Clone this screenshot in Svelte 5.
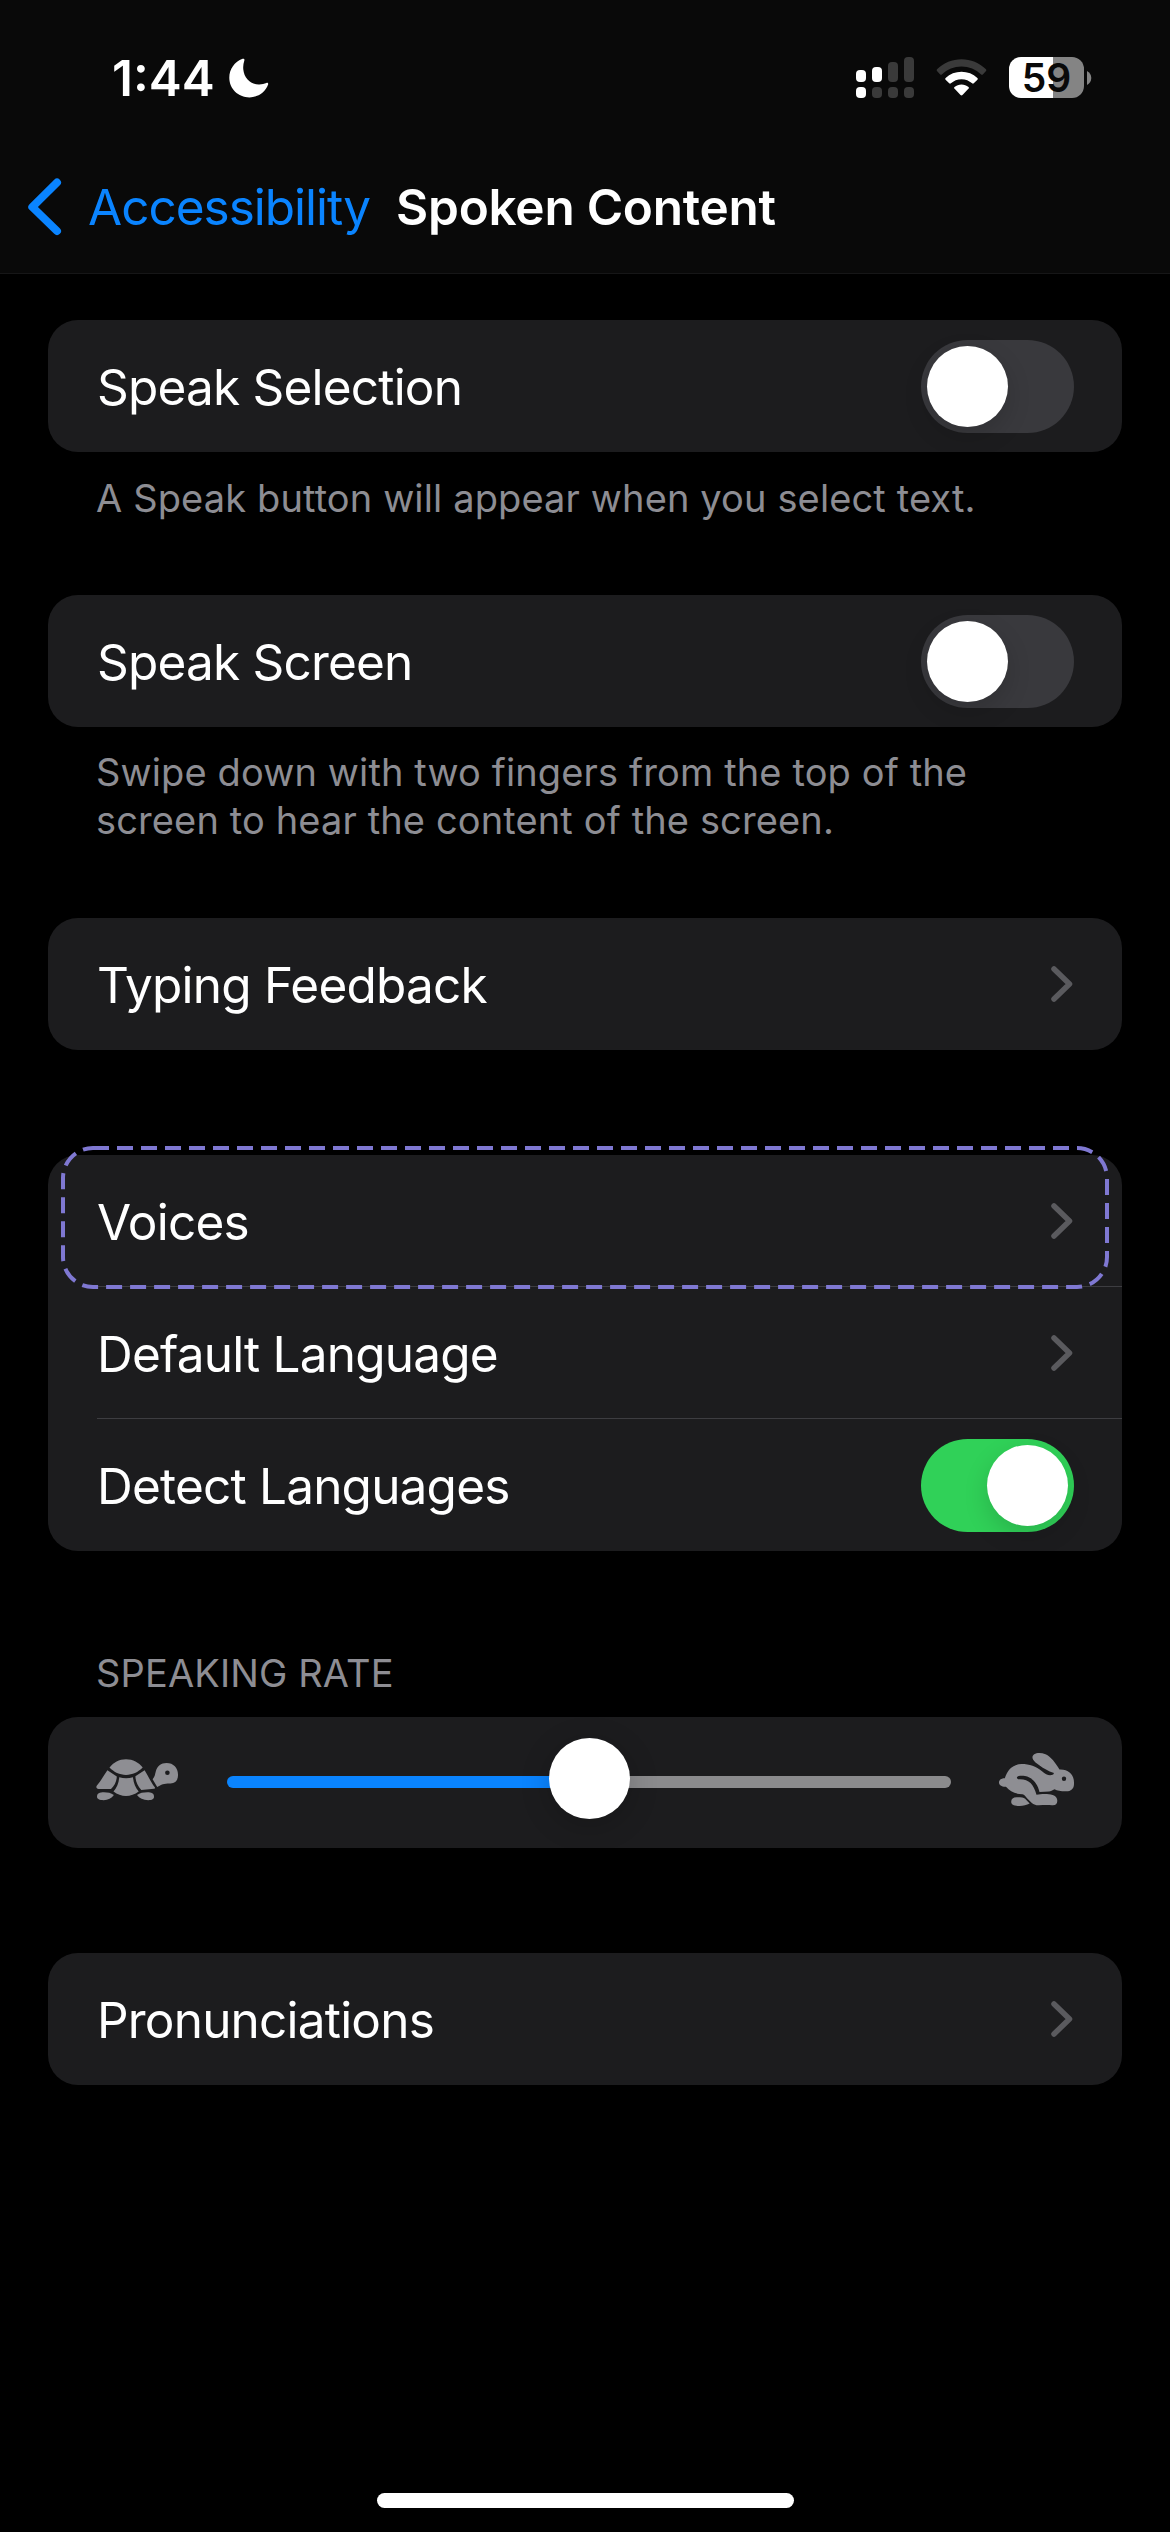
<script lang="ts">
	let speakSelection = $state(false);
	let speakScreen = $state(false);
	let detectLanguages = $state(true);
	let rate = $state(50);

	const bars = [
		{ height: 12, on: true, dot: true },
		{ height: 15, on: true, dot: false },
		{ height: 20, on: false, dot: false },
		{ height: 25, on: false, dot: false }
	];
</script>

{#snippet chevron()}
	<svg class="chevron" width="22" height="36" viewBox="0 0 22 36" aria-hidden="true">
		<path d="M3 3 18.5 18 3 33" />
	</svg>
{/snippet}

{#snippet toggle(label: string, on: boolean, onToggle: () => void)}
	<button type="button" class="toggle" class:on role="switch" aria-checked={on} aria-label={label} onclick={onToggle}>
		<i></i>
	</button>
{/snippet}

<div class="screen">
	<header>
		<div class="status">
			<div class="clock">
				<span>1:44</span>
				<svg width="40" height="40" viewBox="0 0 40 40" aria-hidden="true">
					<path
						d="M13.6.8C14.6.3 15.8 1 15.4 2.200C14.300 5.500 14 8.500 14.300 11.500C15.200 20.200 21.500 26.300 29.600 26.400C32.500 26.500 35.200 26 37.400 25C38.700 24.500 39.500 25.400 39.100 26.600C36.500 34.200 29 39.400 20.500 39.400C9.200 39.400.3 30.900.3 19.800C.3 11.200 5.500 3.800 13.600.8Z"
					/>
				</svg>
			</div>
			<div class="indicators">
				<div class="signal">
					{#each bars as bar}
						<div>
							<i class:on={bar.on} style={`height: ${bar.height}px`}></i>
							<i class="dot" class:on={bar.dot}></i>
						</div>
					{/each}
				</div>
				<svg class="wifi" width="51" height="37" viewBox="0.5 0 51 38" aria-hidden="true">
					<path class="dim" d="M.8 12.300Q0 11.500.9 10.600C7.700 4 16.500.3 26 .3S44.300 4 51.100 10.600Q52 11.500 51.200 12.300L47.900 15.900Q47 16.700 46.200 15.900C40.700 10.600 33.600 7.700 26 7.700S11.300 10.600 5.800 15.900Q5 16.700 4.100 15.900Z" />
					<path d="M9.600 21.300Q8.800 20.400 9.700 19.600C14.100 15.500 19.800 13.200 26 13.200S37.900 15.500 42.300 19.600Q43.200 20.400 42.400 21.300L38.600 25Q37.800 25.800 36.900 25C34 22.300 30.200 20.700 26 20.700S18 22.300 15.100 25Q14.200 25.800 13.400 25Z" />
					<path d="M18.700 30.400Q17.900 29.500 18.800 28.700C20.800 27.100 23.300 26.200 26 26.200S31.200 27.100 33.200 28.700Q34.100 29.500 33.300 30.400L27 37Q26 38 25 37Z" />
				</svg>
				<div class="battery">
					<span>59</span>
					<svg width="5" height="14" viewBox="0 0 5 14" aria-hidden="true"><path d="M0 0C2.500 1.200 4.300 3.800 4.300 7S2.500 12.800 0 14Z" /></svg>
				</div>
			</div>
		</div>
		<nav>
			<svg width="34" height="58" viewBox="0 0 34 58" aria-hidden="true">
				<path d="M29 4.500 4.300 29 29 53" />
			</svg>
			<a href="#accessibility">Accessibility</a>
			<h1>Spoken Content</h1>
		</nav>
	</header>

	<main>
		<section class="card">
			<div class="row">
				<span>Speak Selection</span>
				{@render toggle('Speak Selection', speakSelection, () => (speakSelection = !speakSelection))}
			</div>
		</section>
		<p class="note first">A Speak button will appear when you select text.</p>

		<section class="card">
			<div class="row">
				<span>Speak Screen</span>
				{@render toggle('Speak Screen', speakScreen, () => (speakScreen = !speakScreen))}
			</div>
		</section>
		<p class="note second">
			Swipe down with two fingers from the top of the<br />screen to hear the content of the screen.
		</p>

		<section class="card typing">
			<div class="row"><span>Typing Feedback</span>{@render chevron()}</div>
		</section>

		<section class="card voices">
			<div class="row">
				<span>Voices</span>{@render chevron()}
				<svg class="highlight" width="1048" height="143" aria-hidden="true">
					<rect x="2" y="2" width="1044" height="139" rx="30" />
				</svg>
			</div>
			<div class="row"><span>Default Language</span>{@render chevron()}</div>
			<div class="row">
				<span>Detect Languages</span>
				{@render toggle('Detect Languages', detectLanguages, () => (detectLanguages = !detectLanguages))}
			</div>
		</section>

		<h2>SPEAKING RATE</h2>
		<section class="card rate">
			<svg class="animal" width="83" height="42" viewBox="0 0 83 42" aria-hidden="true">
				<path d="M13.500 8.600C17.500 3.300 23 .2 30 .2S42.700 3.300 46.700 8.600C42 13.300 36.500 15.900 30 15.900S18 13.300 13.500 8.600Z" />
				<path d="M11.400 11.200 20.800 17.500C20.600 22.500 18.700 26.500 15 29.900H2.500C.5 29.900-.3 28 .9 26.400C5.500 21.200 8 16 11.400 11.200Z" />
				<path d="M23.200 18.200C27.700 19.600 32.500 19.600 37 18.200C37.400 23.600 39.300 28.500 42.700 32.400C38.800 35.300 34.500 36.900 30 36.900S21.300 35.300 17.500 32.400C21 28.500 22.900 23.600 23.200 18.200Z" />
				<path d="M39.400 17.300 48.600 11.200C52 16.500 54.300 22.500 58.800 28.200C59.400 29.200 59 29.600 58 29.700L45.300 30.900C41.600 27 39.600 22.600 39.400 17.300Z" />
				<path d="M1 37.600C1 34.500 3.500 33.300 8 33.300C12 33.300 14.800 33.900 17.900 36C15.500 39.400 12.200 41.200 7.500 41.200C3.500 41.200 1 40.300 1 37.600Z" />
				<path d="M41 36C44 33.900 47 33.300 51.300 33.300C55.500 33.300 58 34.500 58 37.600C58 40.300 56 41.200 52.300 41.200C47 41.200 43.500 39.300 41 36Z" />
				<path
					fill-rule="evenodd"
					d="M70.500 4.100C77.500 4.100 82 9 82 15.500C82.300 20.700 79.500 24.400 74.500 24.400C68.500 24.300 65.500 25 61.200 28.100L56.600 20.300C59 17.500 59 15.300 59.700 12.800C61 7.500 65 4.100 70.500 4.100ZM71.400 11.400A2.300 2.300 0 1 0 71.400 16A2.300 2.300 0 1 0 71.400 11.400Z"
				/>
			</svg>
			<div class="slider" style={`--rate: ${rate}%`}>
				<i class="track"></i>
				<i class="thumb"></i>
				<input type="range" min="0" max="100" bind:value={rate} aria-label="Speaking rate" />
			</div>
			<svg class="animal" width="75" height="55" viewBox="0 0 75 55" aria-hidden="true">
				<path
					fill-rule="evenodd"
					d="M5.800 26.300C8.500 17.500 14.200 12.100 22.500 12.100C30.500 12.100 37 14.500 43 19.300C47.200 22.700 50.500 24.300 54.200 22.500L55 20.900C49.500 19.600 43 15.500 36.500 10.500C33 7.500 32.400 4.200 35.200 2.300C38 .5 42.500.6 46.500 2.300C52 4.800 56.500 11 60.500 17.500C69.500 17 75 22.500 75 30.500C75.300 36.500 72.500 39.200 67.300 39.300C62.500 39.400 58.500 38.900 55.500 37.300C53.500 38.500 51.500 39.500 50 39.500L40.500 40C38.500 31.500 33.500 25.500 26 24C22.500 23.400 18.800 23.700 18 25.200C17.600 26.600 18.500 27.300 20.500 27.200C30 27 34.500 32 37.500 42.700C41 42 46 41.700 50 42.200C55.500 42.500 58.400 45.300 58.300 49C58.200 52 56.500 53.600 53 53.300C47.500 52.600 43.500 53.300 39 53.200C35 53.200 32 50.500 28.500 46.700C26.700 44.500 25.300 42.500 23.500 42.200C16 42.200 11 39.500 7 34.800C3 35.100 0 33.200 0 30.500S2.500 26.300 5.800 26.300ZM65 24.600A2.200 2.200 0 1 0 65 29A2.200 2.200 0 1 0 65 24.600Z"
				/>
				<path d="M12.200 49.800C12.200 46.700 14.500 45 18.500 45.300C23.500 44.800 25.500 45.500 27.300 48L30.700 51.600C27.500 53.300 24.500 54 20.500 54C15 54 12.200 52.900 12.200 49.800Z" />
			</svg>
		</section>

		<section class="card">
			<div class="row"><span>Pronunciations</span>{@render chevron()}</div>
		</section>
	</main>

	<div class="home"></div>
</div>

<style>
	:global(body) {
		margin: 0;
		background: #000;
	}

	.screen {
		width: 1170px;
		height: 2532px;
		display: flex;
		flex-direction: column;
		overflow: hidden;
		background: #000;
		color: #fff;
		font-family: Inter, 'Liberation Sans', sans-serif;
		font-size: 49.5px;
	}

	header {
		height: 273px;
		flex: none;
		background: #090909;
		border-bottom: 1px solid #161617;
	}

	.status {
		height: 155px;
		box-sizing: border-box;
		display: flex;
		justify-content: space-between;
		align-items: center;
		padding: 0 78px 0 112px;
	}

	.clock {
		display: flex;
		align-items: center;
		gap: 14px;
		padding-top: 1px;
		font-weight: 600;
		fill: #fff;
	}

	.indicators {
		display: flex;
		align-items: center;
		gap: 22px;
	}

	.signal {
		display: flex;
		align-items: flex-end;
		gap: 6px;
		height: 41px;
	}

	.signal div {
		display: grid;
		gap: 5px;
	}

	.signal i {
		width: 10px;
		border-radius: 4px;
		background: #3a3a3a;
	}

	.signal i.dot {
		height: 11px;
	}

	.signal i.on {
		background: #fff;
	}

	.wifi {
		fill: #fff;
	}

	.wifi .dim {
		fill: #3a3a3a;
	}

	.battery {
		display: flex;
		align-items: center;
		gap: 3px;
		fill: #848484;
	}

	.battery span {
		width: 75px;
		height: 41px;
		border-radius: 12px;
		background: linear-gradient(to right, #fff 44px, #848484 44px);
		color: #090909;
		font-weight: 600;
		font-size: 39px;
		line-height: 42px;
		text-align: center;
	}

	nav {
		height: 104px;
		display: flex;
		align-items: center;
		padding-left: 28px;
	}

	nav svg {
		fill: none;
		stroke: #0a84ff;
		stroke-width: 8;
		stroke-linecap: round;
		stroke-linejoin: round;
	}

	nav a {
		margin-left: 26px;
		color: #0a84ff;
		letter-spacing: -1px;
		text-decoration: none;
	}

	h1 {
		margin: 0 0 0 26px;
		font-size: 49.5px;
		font-weight: 600;
		letter-spacing: -0.25px;
	}

	main {
		flex: 1;
		display: flex;
		flex-direction: column;
		padding: 46px 48px 0;
	}

	.card {
		flex: none;
		border-radius: 30px;
		background: #1c1c1e;
	}

	.row {
		position: relative;
		height: 132px;
		box-sizing: border-box;
		display: flex;
		justify-content: space-between;
		align-items: center;
		padding: 0 48px 0 49px;
	}

	.row span {
		padding-top: 2px;
		letter-spacing: -0.8px;
	}

	.row + .row::before {
		content: '';
		position: absolute;
		top: -1px;
		right: 0;
		left: 49px;
		height: 1px;
		background: #3d3d41;
	}

	.chevron {
		margin-right: 1px;
		fill: none;
		stroke: #5a5a5e;
		stroke-width: 5.5;
		stroke-linecap: round;
		stroke-linejoin: round;
	}

	.highlight {
		position: absolute;
		z-index: 1;
		top: -9px;
		left: 13px;
		fill: none;
		stroke: #7f78d2;
		stroke-width: 4;
		stroke-dasharray: 16 8;
	}

	.toggle {
		width: 153px;
		height: 93px;
		display: flex;
		margin-top: 1px;
		padding: 6px;
		border: 0;
		border-radius: 47px;
		background: #39393d;
	}

	.toggle.on {
		justify-content: flex-end;
		background: #30d158;
	}

	.toggle i {
		width: 81px;
		height: 81px;
		border-radius: 50%;
		background: #fff;
		box-shadow: 0 9px 24px rgb(0 0 0 / 0.15);
	}

	.note,
	h2 {
		margin: 0;
		padding: 0 48px;
		color: #8d8d93;
		font-size: 38px;
		font-weight: 400;
		line-height: 48px;
		letter-spacing: 0.13px;
	}

	.first {
		height: 121px;
		padding-top: 22px;
	}

	.second {
		height: 170px;
		padding-top: 21px;
	}

	.typing {
		margin-bottom: 105px;
	}

	h2 {
		margin: 98px 0 20px;
	}

	.rate {
		height: 131px;
		box-sizing: border-box;
		display: flex;
		align-items: center;
		justify-content: space-between;
		margin-bottom: 105px;
		padding: 0 48px;
	}

	.animal {
		flex: none;
		margin-bottom: 6px;
		fill: #8e8e93;
	}

	.slider {
		position: relative;
		width: 724px;
		height: 81px;
		display: flex;
		align-items: center;
	}

	.track {
		flex: 1;
		height: 12px;
		margin-bottom: 1px;
		border-radius: 6px;
		background: linear-gradient(to right, #0a84ff var(--rate), #8b8b8d var(--rate));
	}

	.thumb {
		position: absolute;
		top: -4px;
		left: var(--rate);
		width: 81px;
		height: 81px;
		margin-left: -40px;
		border-radius: 50%;
		background: #fff;
		box-shadow: 0 6px 30px rgb(0 0 0 / 0.2);
	}

	.slider input {
		position: absolute;
		inset: 0;
		width: 100%;
		height: 100%;
		margin: 0;
		opacity: 0;
	}

	.home {
		flex: none;
		align-self: center;
		width: 417px;
		height: 15px;
		margin-bottom: 24px;
		border-radius: 8px;
		background: #fff;
	}
</style>
